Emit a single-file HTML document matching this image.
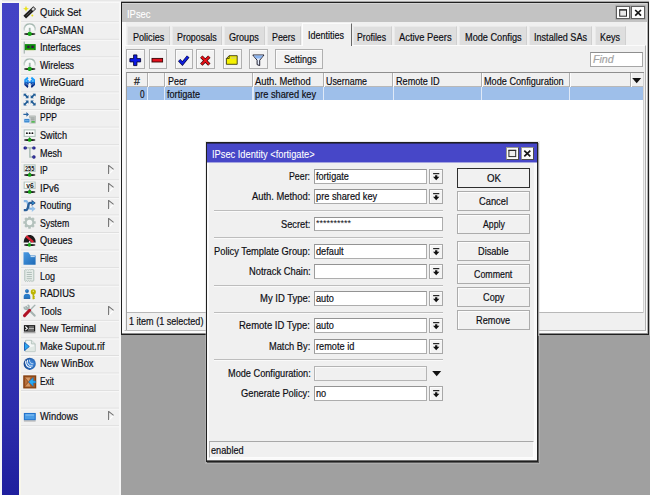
<!DOCTYPE html>
<html>
<head>
<meta charset="utf-8">
<title>WinBox - IPsec Identity</title>
<style>
*{box-sizing:border-box;margin:0;padding:0}
html,body{width:650px;height:495px;overflow:hidden}
body{background:#a0a0a0;font-family:"Liberation Sans",sans-serif;font-size:11px;color:#0e0e14;position:relative}
body>div,body>svg{position:absolute}
body>div>div{position:absolute}
.t{-webkit-text-stroke:0.2px currentColor;position:absolute;white-space:nowrap;transform-origin:0 0;line-height:1;display:block}
svg{overflow:visible}

</style>
</head>
<body>
<div style="left:0px;top:0px;width:650px;height:3px;background:linear-gradient(#e2e2e2,#f4f4f4 60%,#fcfcfc)"></div>
<div style="left:0px;top:0px;width:2px;height:495px;background:#f6f6f6"></div>
<div style="left:649px;top:0px;width:1px;height:336px;background:linear-gradient(#f4f4f4,#f0f0f0 40%,#c4c4c4 75%,#b0b0b0)"></div>
<div style="left:2px;top:3px;width:17px;height:492px;background:linear-gradient(#4343c5,#3c3cbe 55%,#2b2baa 85%,#1f1f9e)"></div>
<div style="left:19px;top:3px;width:100px;height:492px;background:#f0f0f0"></div>
<div style="left:119px;top:3px;width:2px;height:492px;background:#f7f7f7"></div>
<div style="left:19px;top:3px;width:1.5px;height:492px;background:#f8f6ea"></div>
<span class="t" style="left:40.00px;top:7.09px;transform:scaleX(0.8640);">Quick Set</span>
<svg style="left:23.3px;top:5.6px" width="13" height="13" viewBox="0 0 13 13"><path d="M1.7,11.2 L11.7,1.7" stroke="#1e1e1e" stroke-width="3.9" stroke-linecap="butt"/><path d="M9.2,4.1 L11.2,2.2" stroke="#dcdcdc" stroke-width="2.3"/><path d="M3.4,9.6 L8.4,4.9" stroke="#555" stroke-width="1"/><path d="M3,-0.2 L3.9,1.9 L6,2.7 L3.9,3.6 L3,5.7 L2.1,3.6 L0,2.7 L2.1,1.9 Z" fill="#e8e018"/><circle cx="9.3" cy="9.6" r="1" fill="#e8e018"/></svg>
<span class="t" style="left:40.00px;top:24.65px;transform:scaleX(0.8276);">CAPsMAN</span>
<svg style="left:23.3px;top:23.2px" width="13" height="13" viewBox="0 0 13 13"><defs><linearGradient id="cpg2" x1="0" y1="0" x2="0" y2="1"><stop offset="0" stop-color="#9fb3ab"/><stop offset="1" stop-color="#cfdad5"/></linearGradient></defs><path d="M1.35,7.6 A5.5,5.6 0 1 1 12.05,7.6" fill="#f8faf9" stroke="url(#cpg2)" stroke-width="1.5"/><rect x="5.8" y="4.8" width="1.8" height="4" fill="#9fb5ab"/><ellipse cx="6.7" cy="11" rx="5.7" ry="1" fill="#1a1a1a"/><circle cx="6.7" cy="10.9" r="2.15" fill="#14a814"/></svg>
<span class="t" style="left:40.00px;top:42.22px;transform:scaleX(0.8385);">Interfaces</span>
<svg style="left:23.3px;top:40.7px" width="13" height="13" viewBox="0 0 13 13"><rect x="0.7" y="0.6" width="1.1" height="12" fill="#9fb0aa"/><rect x="1.8" y="3.1" width="10.9" height="6" fill="#0c8c0c"/><rect x="4.3" y="4.7" width="2.2" height="2.3" fill="#3a1048"/><rect x="8.4" y="4.7" width="2.3" height="2.3" fill="#3a1048"/><path d="M3.5,8.8 h1 m1,0 h1 m1,0 h1 m1,0 h1" stroke="#d8d020" stroke-width="0.7"/></svg>
<span class="t" style="left:40.00px;top:59.78px;transform:scaleX(0.8063);">Wireless</span>
<svg style="left:23.3px;top:58.3px" width="13" height="13" viewBox="0 0 13 13"><defs><linearGradient id="cpg4" x1="0" y1="0" x2="0" y2="1"><stop offset="0" stop-color="#9fb3ab"/><stop offset="1" stop-color="#cfdad5"/></linearGradient></defs><path d="M1.35,7.6 A5.5,5.6 0 1 1 12.05,7.6" fill="#f8faf9" stroke="url(#cpg4)" stroke-width="1.5"/><rect x="5.8" y="4.8" width="1.8" height="4" fill="#9fb5ab"/><ellipse cx="6.7" cy="11" rx="5.7" ry="1" fill="#1a1a1a"/><circle cx="6.7" cy="10.9" r="2.15" fill="#14a814"/></svg>
<span class="t" style="left:40.00px;top:77.35px;transform:scaleX(0.8237);">WireGuard</span>
<svg style="left:23.3px;top:75.9px" width="13" height="13" viewBox="0 0 13 13"><defs><linearGradient id="wgg" x1="0" y1="0" x2="0" y2="1"><stop offset="0" stop-color="#1aa8ff"/><stop offset="0.42" stop-color="#1a90f4"/><stop offset="0.6" stop-color="#1048a8"/><stop offset="1" stop-color="#081c68"/></linearGradient></defs><path d="M4.4,0.7 L1.3,3.5 V9 L4.6,11.9 L5.5,10.1 L4.3,8.6 H5.7 V4 H4.3 L5.5,2.5 Z M8.9,0.7 L12,3.5 V9 L8.7,11.9 L7.8,10.1 L9,8.6 H7.6 V4 H9 L7.8,2.5 Z M5.5,5.6 H7.8 V6.9 H5.5 Z" fill="url(#wgg)"/><rect x="2.7" y="4.2" width="1.5" height="1.5" fill="#7fd0ff" opacity="0.8"/><rect x="9.1" y="4.2" width="1.5" height="1.5" fill="#7fd0ff" opacity="0.8"/><rect x="2.7" y="7" width="1.5" height="1.5" fill="#5a86c8" opacity="0.8"/><rect x="9.1" y="7" width="1.5" height="1.5" fill="#5a86c8" opacity="0.8"/></svg>
<span class="t" style="left:40.00px;top:94.91px;transform:scaleX(0.7863);">Bridge</span>
<svg style="left:23.3px;top:93.4px" width="13" height="13" viewBox="0 0 13 13"><path d="M1.6,1.3 L4.5,4.2" stroke="#1f5b95" stroke-width="1.7"/><path d="M0.6,0.3 L3.7,0.3 L0.6,3.4 Z" fill="#1f5b95"/><path d="M5.5,5.2 L2.4,5.2 L5.5,2.1 Z" fill="#1f5b95"/><path d="M11.6,1.3 L8.7,4.2" stroke="#1f5b95" stroke-width="1.7"/><path d="M12.6,0.3 L9.5,0.3 L12.6,3.4 Z" fill="#1f5b95"/><path d="M7.7,5.2 L10.8,5.2 L7.7,2.1 Z" fill="#1f5b95"/><path d="M1.6,11.5 L4.5,8.6" stroke="#1f5b95" stroke-width="1.7"/><path d="M0.6,12.5 L3.7,12.5 L0.6,9.4 Z" fill="#1f5b95"/><path d="M5.5,7.6 L2.4,7.6 L5.5,10.7 Z" fill="#1f5b95"/><path d="M11.6,11.5 L8.7,8.6" stroke="#1f5b95" stroke-width="1.7"/><path d="M12.6,12.5 L9.5,12.5 L12.6,9.4 Z" fill="#1f5b95"/><path d="M7.7,7.6 L10.8,7.6 L7.7,10.7 Z" fill="#1f5b95"/></svg>
<span class="t" style="left:40.00px;top:112.48px;transform:scaleX(0.7723);">PPP</span>
<svg style="left:23.3px;top:111.0px" width="13" height="13" viewBox="0 0 13 13"><path d="M0.4,2.7 H3.4 V1 L6,3.4 L3.4,5.8 V4.1 H0.4 Z" fill="#2a64a0"/><rect x="6.4" y="4.9" width="6.2" height="7.2" fill="#c4c8c6" stroke="#a9aeac" stroke-width="0.6"/><path d="M7.4,7 h4.2 M7.4,8.8 h4.2" stroke="#8c9290" stroke-width="0.8"/><rect x="8.4" y="10.3" width="3.4" height="1.2" fill="#28b428"/><rect x="0.9" y="7.7" width="6" height="4.2" fill="#2a7cc8" stroke="#eef4fa" stroke-width="0.8"/><rect x="2" y="9.2" width="3.8" height="1.1" fill="#7ab8ec"/></svg>
<span class="t" style="left:40.00px;top:130.04px;transform:scaleX(0.8334);">Switch</span>
<svg style="left:23.3px;top:128.6px" width="13" height="13" viewBox="0 0 13 13"><rect x="1.2" y="0.9" width="10.9" height="6.5" fill="#fbfdfc" stroke="#b2c3bc" stroke-width="1.1"/><circle cx="3.9" cy="4.15" r="0.95" fill="#111"/><circle cx="6.65" cy="4.15" r="0.95" fill="#111"/><circle cx="9.4" cy="4.15" r="0.95" fill="#111"/><path d="M5.5,10.3 L6.7,7.9 L7.9,10.3 Z" fill="#1a1a1a"/><ellipse cx="6.7" cy="11" rx="5.7" ry="1" fill="#1a1a1a"/><circle cx="6.7" cy="10.9" r="1.85" fill="#14a814"/></svg>
<span class="t" style="left:40.00px;top:147.61px;transform:scaleX(0.8179);">Mesh</span>
<svg style="left:23.3px;top:146.1px" width="13" height="13" viewBox="0 0 13 13"><path d="M2.2,1.9 H10.9 M6.9,1.9 V11 H10.9" fill="none" stroke="#a5b9b1" stroke-width="1.4"/><circle cx="2.2" cy="1.9" r="1.7" fill="#12127e"/><circle cx="2.2" cy="1.9" r="0.65" fill="#6a6ac8"/><circle cx="10.9" cy="1.9" r="1.7" fill="#12127e"/><circle cx="10.9" cy="1.9" r="0.65" fill="#6a6ac8"/><circle cx="10.9" cy="11" r="1.7" fill="#12127e"/><circle cx="10.9" cy="11" r="0.65" fill="#6a6ac8"/></svg>
<span class="t" style="left:40.00px;top:165.17px;transform:scaleX(0.7408);">IP</span>
<svg style="left:23.3px;top:163.7px" width="13" height="13" viewBox="0 0 13 13"><rect x="1.2" y="0.9" width="10.9" height="6.5" fill="#fbfdfc" stroke="#b2c3bc" stroke-width="1.1"/><text x="6.65" y="6.9" font-family="Liberation Sans" font-size="7.4" font-weight="bold" text-anchor="middle" fill="#111" textLength="9.2" lengthAdjust="spacingAndGlyphs">255</text><path d="M5.5,10.3 L6.7,7.9 L7.9,10.3 Z" fill="#1a1a1a"/><ellipse cx="6.7" cy="11" rx="5.7" ry="1" fill="#1a1a1a"/><circle cx="6.7" cy="10.9" r="1.85" fill="#14a814"/></svg>
<svg style="left:107.9px;top:165.09px" width="7" height="10" viewBox="0 0 7 10"><path d="M5.5,4.5 L0.8,9.2" fill="none" stroke="#fff" stroke-width="1.1"/><path d="M0.6,0 V9 M0.6,0.3 L5.6,4.4" fill="none" stroke="#707070" stroke-width="1.05"/></svg>
<span class="t" style="left:40.00px;top:182.74px;transform:scaleX(0.8632);">IPv6</span>
<svg style="left:23.3px;top:181.2px" width="13" height="13" viewBox="0 0 13 13"><rect x="1.2" y="0.9" width="10.9" height="6.5" fill="#fbfdfc" stroke="#b2c3bc" stroke-width="1.1"/><text x="7" y="6.8" font-family="Liberation Sans" font-size="7.6" font-weight="bold" text-anchor="middle" fill="#111" textLength="7.6" lengthAdjust="spacingAndGlyphs">v6</text><path d="M5.5,10.3 L6.7,7.9 L7.9,10.3 Z" fill="#1a1a1a"/><ellipse cx="6.7" cy="11" rx="5.7" ry="1" fill="#1a1a1a"/><circle cx="6.7" cy="10.9" r="1.85" fill="#14a814"/></svg>
<svg style="left:107.9px;top:182.65px" width="7" height="10" viewBox="0 0 7 10"><path d="M5.5,4.5 L0.8,9.2" fill="none" stroke="#fff" stroke-width="1.1"/><path d="M0.6,0 V9 M0.6,0.3 L5.6,4.4" fill="none" stroke="#707070" stroke-width="1.05"/></svg>
<span class="t" style="left:40.00px;top:200.30px;transform:scaleX(0.8229);">Routing</span>
<svg style="left:23.3px;top:198.8px" width="13" height="13" viewBox="0 0 13 13"><path d="M0.8,2.1 H3.2 C5.6,2.1 4.6,9.7 7,9.7 H9.4" fill="none" stroke="#86b6e4" stroke-width="2.1"/><path d="M8.8,6.7 L12.6,9.8 L8.8,12.9 Z" fill="#96c2ec"/><path d="M0.8,11.2 H3 C5.8,11.2 4.6,3.9 7,3.9 H9.4" fill="none" stroke="#2a5f98" stroke-width="2.3"/><path d="M8.6,0.7 L12.7,3.9 L8.6,7.1 Z" fill="#274c84"/><path d="M9.4,2.5 L11.4,3.9 L9.4,5.3 Z" fill="#2fa4e8"/></svg>
<svg style="left:107.9px;top:200.22px" width="7" height="10" viewBox="0 0 7 10"><path d="M5.5,4.5 L0.8,9.2" fill="none" stroke="#fff" stroke-width="1.1"/><path d="M0.6,0 V9 M0.6,0.3 L5.6,4.4" fill="none" stroke="#707070" stroke-width="1.05"/></svg>
<span class="t" style="left:40.00px;top:217.87px;transform:scaleX(0.7962);">System</span>
<svg style="left:23.3px;top:216.4px" width="13" height="13" viewBox="0 0 13 13"><path d="M11.22,5.19 L12.67,5.25 L12.67,7.75 L11.22,7.81 L10.76,8.92 L11.75,9.98 L9.98,11.75 L8.92,10.76 L7.81,11.22 L7.75,12.67 L5.25,12.67 L5.19,11.22 L4.08,10.76 L3.02,11.75 L1.25,9.98 L2.24,8.92 L1.78,7.81 L0.33,7.75 L0.33,5.25 L1.78,5.19 L2.24,4.08 L1.25,3.02 L3.02,1.25 L4.08,2.24 L5.19,1.78 L5.25,0.33 L7.75,0.33 L7.81,1.78 L8.92,2.24 L9.98,1.25 L11.75,3.02 L10.76,4.08 Z" fill="#b3c1bc"/><circle cx="6.5" cy="6.5" r="2.75" fill="#f4f6f5"/></svg>
<svg style="left:107.9px;top:217.78px" width="7" height="10" viewBox="0 0 7 10"><path d="M5.5,4.5 L0.8,9.2" fill="none" stroke="#fff" stroke-width="1.1"/><path d="M0.6,0 V9 M0.6,0.3 L5.6,4.4" fill="none" stroke="#707070" stroke-width="1.05"/></svg>
<span class="t" style="left:40.00px;top:235.43px;transform:scaleX(0.8384);">Queues</span>
<svg style="left:23.3px;top:233.9px" width="13" height="13" viewBox="0 0 13 13"><path d="M0.7,8.7 C0.7,-1.6 12.7,-1.6 12.7,8.7 Z" fill="#1c1c1c"/><path d="M3.2,2.2 L10.2,8.2" stroke="#dc2434" stroke-width="2.4"/><rect x="0.7" y="8.7" width="12" height="0.9" fill="#fafafa"/><rect x="6" y="7" width="1.3" height="3" fill="#ddd"/><ellipse cx="6.7" cy="11" rx="5.7" ry="0.95" fill="#1a1a1a"/><circle cx="6.4" cy="10.9" r="1.8" fill="#14a814"/></svg>
<span class="t" style="left:40.00px;top:253.00px;transform:scaleX(0.7492);">Files</span>
<svg style="left:23.3px;top:251.5px" width="13" height="13" viewBox="0 0 13 13"><defs><linearGradient id="flg" x1="0" y1="0" x2="1" y2="1"><stop offset="0" stop-color="#4a9ae2"/><stop offset="1" stop-color="#1e6ab6"/></linearGradient></defs><path d="M0.5,0.2 H5.4 L7.6,3.6 H12.6 V12.8 H0.5 Z" fill="url(#flg)"/><rect x="7.6" y="4.2" width="4.2" height="0.9" fill="#e8f2fc"/></svg>
<span class="t" style="left:40.00px;top:270.56px;transform:scaleX(0.8174);">Log</span>
<svg style="left:23.3px;top:269.1px" width="13" height="13" viewBox="0 0 13 13"><path d="M1.8,1 L2.7,0.2 L3.6,1 L4.5,0.2 L5.4,1 L6.3,0.2 L7.2,1 L8.1,0.2 L9,1 L9.9,0.2 L10.8,1 V11.6 L9.9,12.4 L9,11.6 L8.1,12.4 L7.2,11.6 L6.3,12.4 L5.4,11.6 L4.5,12.4 L3.6,11.6 L2.7,12.4 L1.8,11.6 Z" fill="#e6ece9" stroke="#b0c0b9" stroke-width="1"/><path d="M3.7,3.4 h5.2 M3.7,5.5 h5.2 M3.7,7.6 h5.2 M3.7,9.7 h5.2" stroke="#a9b9b2" stroke-width="0.9"/></svg>
<span class="t" style="left:40.00px;top:288.13px;transform:scaleX(0.8421);">RADIUS</span>
<svg style="left:23.3px;top:286.6px" width="13" height="13" viewBox="0 0 13 13"><circle cx="4" cy="4.1" r="1.9" fill="#1b68b2"/><circle cx="3.7" cy="3.7" r="0.9" fill="#3d8ad2"/><path d="M0.7,11.7 V9.8 A3.3,3 0 0 1 7.3,9.8 V11.7 Z" fill="#2a7cc8"/><path d="M0.9,11.7 V10.8 H7.1 V11.7 Z" fill="#175a9e"/><circle cx="10.3" cy="4.9" r="2.55" fill="#bcb400"/><circle cx="10.3" cy="4.2" r="0.75" fill="#ece890"/><path d="M10.3,7 V12.3 M10.3,9.4 H11.7 M10.3,11.2 H11.7" stroke="#bcb400" stroke-width="1.5" fill="none"/></svg>
<span class="t" style="left:40.00px;top:305.69px;transform:scaleX(0.8373);">Tools</span>
<svg style="left:23.3px;top:304.2px" width="13" height="13" viewBox="0 0 13 13"><path d="M3.2,3 L11.6,11.6" stroke="#a6b4b2" stroke-width="2.2" stroke-linecap="round"/><path d="M1.2,2.8 A2.4,2.4 0 1 0 4.6,0.8" fill="none" stroke="#a6b4b2" stroke-width="1.5"/><path d="M12.3,0.7 L7.4,5.8" stroke="#a6b4b2" stroke-width="1.3"/><path d="M6.6,6.3 L1.5,11.6" stroke="#b01224" stroke-width="3" stroke-linecap="round"/></svg>
<svg style="left:107.9px;top:305.61px" width="7" height="10" viewBox="0 0 7 10"><path d="M5.5,4.5 L0.8,9.2" fill="none" stroke="#fff" stroke-width="1.1"/><path d="M0.6,0 V9 M0.6,0.3 L5.6,4.4" fill="none" stroke="#707070" stroke-width="1.05"/></svg>
<span class="t" style="left:40.00px;top:323.26px;transform:scaleX(0.8430);">New Terminal</span>
<svg style="left:23.3px;top:321.8px" width="13" height="13" viewBox="0 0 13 13"><rect x="0.9" y="3.1" width="11.3" height="6.5" fill="#1c1c1c"/><path d="M2.3,4.5 L4.3,6.3 L2.3,8.1" fill="none" stroke="#fff" stroke-width="1.1"/><path d="M5.8,5 h5.2 M5.8,6.5 h5.2 M4.8,8 h6.2" stroke="#b4b4b4" stroke-width="1.1"/><rect x="0.6" y="10.3" width="11.9" height="0.9" fill="#8a8a8a"/></svg>
<span class="t" style="left:40.00px;top:340.82px;transform:scaleX(0.8386);">Make Supout.rif</span>
<svg style="left:23.3px;top:339.3px" width="13" height="13" viewBox="0 0 13 13"><path d="M2.6,1.2 H8.4 L12.1,4.9 V12.6 H2.6 Z" fill="#f4f7f6" stroke="#b3c2bc" stroke-width="1"/><path d="M8.4,1.2 V4.9 H12.1" fill="#dfe7e3" stroke="#b3c2bc" stroke-width="0.9"/><path d="M5,9 L12,7 L12,12.6 L3,12.6Z" fill="#dbe4e0" opacity="0.8"/><path d="M1.5,3.4 L6.3,7.5 L1.5,11.6 Z" fill="#2aa8f4" stroke="#2264b4" stroke-width="1"/></svg>
<span class="t" style="left:40.00px;top:358.39px;transform:scaleX(0.8498);">New WinBox</span>
<svg style="left:23.3px;top:356.9px" width="13" height="13" viewBox="0 0 13 13"><defs><radialGradient id="wbg" cx="0.6" cy="0.5" r="0.62"><stop offset="0" stop-color="#4f97e6"/><stop offset="0.65" stop-color="#2868b8"/><stop offset="1" stop-color="#153c7c"/></radialGradient></defs><circle cx="6.7" cy="6.8" r="6.1" fill="url(#wbg)"/><path d="M2.9,3.8 A5,5 0 0 0 8.2,10.4" fill="none" stroke="#fff" stroke-width="1.1"/><path d="M4.6,2.9 A4.6,4.6 0 0 0 9.8,9" fill="none" stroke="#eef4fc" stroke-width="1"/><path d="M6.6,2.7 A3.4,3.4 0 0 0 10.4,6.8" fill="none" stroke="#cfe0f4" stroke-width="0.9"/></svg>
<span class="t" style="left:40.00px;top:375.95px;transform:scaleX(0.7526);">Exit</span>
<svg style="left:23.3px;top:374.5px" width="13" height="13" viewBox="0 0 13 13"><rect x="0.9" y="1" width="11.7" height="11.8" fill="#a45a26" stroke="#84400f" stroke-width="1.3"/><path d="M2.2,2.4 H7.6 L5.6,6.4 Z M2.2,11.4 H7.6 L5.6,7.4 Z" fill="#d49a68"/><path d="M2.2,3.8 L4.6,6.9 L2.2,10 Z" fill="#b87440"/><path d="M5.6,6.9 L10.2,2.6 V5.9 H12.6 V7.9 H10.2 V11.2 Z" fill="#27aaf2" stroke="#1a78c8" stroke-width="0.6"/></svg>
<span class="t" style="left:40.00px;top:411.08px;transform:scaleX(0.8516);">Windows</span>
<svg style="left:23.3px;top:409.6px" width="13" height="13" viewBox="0 0 13 13"><rect x="1.4" y="3.5" width="10.8" height="6.2" fill="#4a9ce6" stroke="#2273cc" stroke-width="1.1"/><rect x="2.5" y="4.5" width="8.6" height="1" fill="#8cc4f4"/><rect x="0.9" y="10.5" width="11.7" height="0.9" fill="#9a9a9a"/></svg>
<svg style="left:107.9px;top:411.00px" width="7" height="10" viewBox="0 0 7 10"><path d="M5.5,4.5 L0.8,9.2" fill="none" stroke="#fff" stroke-width="1.1"/><path d="M0.6,0 V9 M0.6,0.3 L5.6,4.4" fill="none" stroke="#707070" stroke-width="1.05"/></svg>
<svg style="left:20.5px;top:0" width="99" height="495" viewBox="0 0 99 495"><rect x="0" y="21.27" width="98" height="1" fill="#dedede"/><rect x="0" y="22.27" width="98" height="1" fill="#f8f8f8"/><rect x="0" y="38.83" width="98" height="1" fill="#dedede"/><rect x="0" y="39.83" width="98" height="1" fill="#f8f8f8"/><rect x="0" y="56.40" width="98" height="1" fill="#dedede"/><rect x="0" y="57.40" width="98" height="1" fill="#f8f8f8"/><rect x="0" y="73.96" width="98" height="1" fill="#dedede"/><rect x="0" y="74.96" width="98" height="1" fill="#f8f8f8"/><rect x="0" y="91.53" width="98" height="1" fill="#dedede"/><rect x="0" y="92.53" width="98" height="1" fill="#f8f8f8"/><rect x="0" y="109.09" width="98" height="1" fill="#dedede"/><rect x="0" y="110.09" width="98" height="1" fill="#f8f8f8"/><rect x="0" y="126.66" width="98" height="1" fill="#dedede"/><rect x="0" y="127.66" width="98" height="1" fill="#f8f8f8"/><rect x="0" y="144.22" width="98" height="1" fill="#dedede"/><rect x="0" y="145.22" width="98" height="1" fill="#f8f8f8"/><rect x="0" y="161.78" width="98" height="1" fill="#dedede"/><rect x="0" y="162.78" width="98" height="1" fill="#f8f8f8"/><rect x="0" y="179.35" width="98" height="1" fill="#dedede"/><rect x="0" y="180.35" width="98" height="1" fill="#f8f8f8"/><rect x="0" y="196.91" width="98" height="1" fill="#dedede"/><rect x="0" y="197.91" width="98" height="1" fill="#f8f8f8"/><rect x="0" y="214.48" width="98" height="1" fill="#dedede"/><rect x="0" y="215.48" width="98" height="1" fill="#f8f8f8"/><rect x="0" y="232.05" width="98" height="1" fill="#dedede"/><rect x="0" y="233.05" width="98" height="1" fill="#f8f8f8"/><rect x="0" y="249.61" width="98" height="1" fill="#dedede"/><rect x="0" y="250.61" width="98" height="1" fill="#f8f8f8"/><rect x="0" y="267.18" width="98" height="1" fill="#dedede"/><rect x="0" y="268.18" width="98" height="1" fill="#f8f8f8"/><rect x="0" y="284.74" width="98" height="1" fill="#dedede"/><rect x="0" y="285.74" width="98" height="1" fill="#f8f8f8"/><rect x="0" y="302.31" width="98" height="1" fill="#dedede"/><rect x="0" y="303.31" width="98" height="1" fill="#f8f8f8"/><rect x="0" y="319.87" width="98" height="1" fill="#dedede"/><rect x="0" y="320.87" width="98" height="1" fill="#f8f8f8"/><rect x="0" y="337.44" width="98" height="1" fill="#dedede"/><rect x="0" y="338.44" width="98" height="1" fill="#f8f8f8"/><rect x="0" y="355.00" width="98" height="1" fill="#dedede"/><rect x="0" y="356.00" width="98" height="1" fill="#f8f8f8"/><rect x="0" y="372.56" width="98" height="1" fill="#dedede"/><rect x="0" y="373.56" width="98" height="1" fill="#f8f8f8"/><rect x="0" y="390.13" width="98" height="1" fill="#dedede"/><rect x="0" y="391.13" width="98" height="1" fill="#f8f8f8"/><rect x="0" y="407.69" width="98" height="1" fill="#dedede"/><rect x="0" y="408.69" width="98" height="1" fill="#f8f8f8"/><rect x="0" y="425.26" width="98" height="1" fill="#dedede"/><rect x="0" y="426.26" width="98" height="1" fill="#f8f8f8"/></svg>
<div style="left:121px;top:1px;width:528px;height:1px;background:#a6a6a6"></div>
<div style="left:121px;top:2px;width:528px;height:333px;background:#f0f0f0;border:1px solid #202020"></div>
<div style="left:647px;top:3px;width:1px;height:331px;background:#b4b4b4"></div>
<div style="left:122px;top:333px;width:526px;height:1px;background:#8c8c8c"></div>
<div style="left:122px;top:22px;width:4px;height:311px;background:#f9f9f9"></div>
<div style="left:646px;top:22px;width:1px;height:311px;background:#fbfbfb"></div>
<div style="left:122px;top:331px;width:525px;height:2px;background:#fbfbfb"></div>
<div style="left:122px;top:3px;width:525px;height:19px;background:#c3c3c3;border-top:1px solid #d4d4d4"></div>
<span class="t" style="left:126.50px;top:8.99px;transform:scaleX(0.8542);color:#fff;-webkit-text-stroke:0.12px #fff">IPsec</span>
<div style="left:616px;top:6px;width:14px;height:13px;background:#fdfdfd;border:1px solid #5e5e5e;box-shadow:0 0 0 0.6px rgba(90,90,90,0.35)"></div>
<svg style="left:616px;top:6px" width="14" height="13" viewBox="0 0 14 13"><rect x="3.7" y="3.9" width="6.8" height="6.3" fill="#e9e9e9" stroke="#2a2a2a" stroke-width="1"/><rect x="3.2" y="3.3" width="7.8" height="1.1" fill="#2a2a2a"/></svg>
<div style="left:631px;top:6px;width:14px;height:13px;background:#fdfdfd;border:1px solid #5e5e5e;box-shadow:0 0 0 0.6px rgba(90,90,90,0.35)"></div>
<svg style="left:631px;top:6px" width="14" height="13" viewBox="0 0 14 13"><path d="M4.2,4 L10,9.7 M10,4 L4.2,9.7" stroke="#161616" stroke-width="1.7" fill="none"/></svg>
<div style="left:127.3px;top:26px;width:42.500000000000014px;height:19px;background:#dedede;border:1px solid #e9e9e9;border-right-color:#d0d0d0;border-bottom:none"></div>
<span class="t" style="left:133.00px;top:32.19px;transform:scaleX(0.8232);">Policies</span>
<div style="left:172px;top:26px;width:50px;height:19px;background:#dedede;border:1px solid #e9e9e9;border-right-color:#d0d0d0;border-bottom:none"></div>
<span class="t" style="left:177.30px;top:32.19px;transform:scaleX(0.8096);">Proposals</span>
<div style="left:223.8px;top:26px;width:40.80000000000001px;height:19px;background:#dedede;border:1px solid #e9e9e9;border-right-color:#d0d0d0;border-bottom:none"></div>
<span class="t" style="left:228.80px;top:32.19px;transform:scaleX(0.8234);">Groups</span>
<div style="left:266.8px;top:26px;width:33.80000000000001px;height:19px;background:#dedede;border:1px solid #e9e9e9;border-right-color:#d0d0d0;border-bottom:none"></div>
<span class="t" style="left:271.80px;top:32.19px;transform:scaleX(0.8074);">Peers</span>
<div style="left:353px;top:26px;width:39px;height:19px;background:#dedede;border:1px solid #e9e9e9;border-right-color:#d0d0d0;border-bottom:none"></div>
<span class="t" style="left:357.30px;top:32.19px;transform:scaleX(0.7907);">Profiles</span>
<div style="left:393.8px;top:26px;width:63.19999999999999px;height:19px;background:#dedede;border:1px solid #e9e9e9;border-right-color:#d0d0d0;border-bottom:none"></div>
<span class="t" style="left:399.40px;top:32.19px;transform:scaleX(0.8519);">Active Peers</span>
<div style="left:459.2px;top:26px;width:67.80000000000001px;height:19px;background:#dedede;border:1px solid #e9e9e9;border-right-color:#d0d0d0;border-bottom:none"></div>
<span class="t" style="left:464.80px;top:32.19px;transform:scaleX(0.8340);">Mode Configs</span>
<div style="left:529.4px;top:26px;width:63.10000000000002px;height:19px;background:#dedede;border:1px solid #e9e9e9;border-right-color:#d0d0d0;border-bottom:none"></div>
<span class="t" style="left:534.00px;top:32.19px;transform:scaleX(0.8255);">Installed SAs</span>
<div style="left:594.6px;top:26px;width:31.399999999999977px;height:19px;background:#dedede;border:1px solid #e9e9e9;border-right-color:#d0d0d0;border-bottom:none"></div>
<span class="t" style="left:600.00px;top:32.19px;transform:scaleX(0.8178);">Keys</span>
<div style="left:124px;top:45px;width:522px;height:286px;background:#f0f0f0;border:1px solid #fbfbfb;border-right-color:#b2b2b2;border-bottom-color:#bcbcbc"></div>
<div style="left:126px;top:73px;width:1px;height:257px;background:#a4a4a4"></div>
<div style="left:301.7px;top:23.4px;width:50.2px;height:23px;background:#f0f0f0;border-left:1.4px solid #fdfdfd;border-top:1.4px solid #fbfbfb;border-right:1.2px solid #686868"></div>
<span class="t" style="left:308.20px;top:29.99px;transform:scaleX(0.8177);">Identities</span>
<div style="left:126px;top:49px;width:18.5px;height:20px;background:#f3f3f3;border:1px solid #b0b0b0;box-shadow:inset 1px 1px 0 #fcfcfc"></div>
<div style="left:148.5px;top:49px;width:18.5px;height:20px;background:#f3f3f3;border:1px solid #b0b0b0;box-shadow:inset 1px 1px 0 #fcfcfc"></div>
<div style="left:174.5px;top:49px;width:18.5px;height:20px;background:#f3f3f3;border:1px solid #b0b0b0;box-shadow:inset 1px 1px 0 #fcfcfc"></div>
<div style="left:196px;top:49px;width:18.599999999999994px;height:20px;background:#f3f3f3;border:1px solid #b0b0b0;box-shadow:inset 1px 1px 0 #fcfcfc"></div>
<div style="left:222.8px;top:49px;width:18.799999999999983px;height:20px;background:#f3f3f3;border:1px solid #b0b0b0;box-shadow:inset 1px 1px 0 #fcfcfc"></div>
<div style="left:249.3px;top:49px;width:18.30000000000001px;height:20px;background:#f3f3f3;border:1px solid #b0b0b0;box-shadow:inset 1px 1px 0 #fcfcfc"></div>
<div style="left:275.3px;top:49px;width:48.099999999999966px;height:20px;background:#f3f3f3;border:1px solid #b0b0b0;box-shadow:inset 1px 1px 0 #fcfcfc"></div>
<span class="t" style="left:283.70px;top:53.89px;transform:scaleX(0.8177);">Settings</span>
<svg style="left:126.4px;top:49.8px" width="120" height="20" viewBox="0 0 120 20"><path d="M7.6,4.9 h3.3 v3.7 h3.7 v3.3 h-3.7 v3.7 h-3.3 v-3.7 h-3.7 v-3.3 h3.7 z" fill="#0a18e8" stroke="#06063a" stroke-width="0.9"/><rect x="26" y="8.4" width="10.6" height="3.6" fill="#e4101c" stroke="#3a0606" stroke-width="0.9"/><path d="M53.2,10.2 L56.4,13.6 L62.2,6.4" fill="none" stroke="#06063a" stroke-width="3.2"/><path d="M53.4,10.3 L56.4,13.4 L62,6.6" fill="none" stroke="#1020e0" stroke-width="2"/><path d="M75.3,6.6 L83.3,14.6 M83.3,6.6 L75.3,14.6" fill="none" stroke="#3a0606" stroke-width="3.4"/><path d="M75.5,6.8 L83.1,14.4 M83.1,6.8 L75.5,14.4" fill="none" stroke="#e81018" stroke-width="2"/><path d="M103.2,5.7 H111.2 V14.3 H100.4 V8.5 Z" fill="#f4f000" stroke="#3a3a10" stroke-width="0.9"/><path d="M103.2,5.7 V8.5 H100.4" fill="none" stroke="#3a3a10" stroke-width="0.8"/><path d="M105,8 h5" stroke="#c8c49a" stroke-width="1"/></svg>
<svg style="left:249.2px;top:50.1px" width="19" height="20" viewBox="0 0 19 20"><path d="M3.8,5 H15 L10.7,10.2 V15.6 L8.1,14.6 V10.2 Z" fill="#e8f0ff" stroke="#202030" stroke-width="1"/><path d="M4.6,5.4 H14.2 L11.4,8.4 H7.4 Z" fill="#8ab4f0"/></svg>
<div style="left:590.4px;top:52.2px;width:52.3px;height:14.5px;background:#fff;border:1px solid #a6a6a6;border-top-color:#8e8e8e"></div>
<span class="t" style="left:593.30px;top:54.07px;transform:scaleX(0.9254);font-size:11.5px;color:#a4a4a4;font-style:italic;">Find</span>
<div style="left:126px;top:72px;width:517.5px;height:240.5px;background:#fff;border-top:1px solid #8e8e8e;border-left:1px solid #a0a0a0"></div>
<div style="left:127px;top:73px;width:516.5px;height:14.2px;background:#f0f0f0;border-bottom:1px solid #b8b8b8"></div>
<div style="left:127px;top:87.2px;width:516.5px;height:12.6px;background:#9ebfea"></div>
<div style="left:146.9px;top:73px;width:1px;height:14px;background:#b0b0b0"></div>
<div style="left:147.9px;top:73px;width:1px;height:14px;background:#fdfdfd"></div>
<div style="left:147.1px;top:87.2px;width:1.2px;height:12.6px;background:#dfe9f7"></div>
<div style="left:163.9px;top:73px;width:1px;height:14px;background:#b0b0b0"></div>
<div style="left:164.9px;top:73px;width:1px;height:14px;background:#fdfdfd"></div>
<div style="left:164.1px;top:87.2px;width:1.2px;height:12.6px;background:#dfe9f7"></div>
<div style="left:252.2px;top:73px;width:1px;height:14px;background:#b0b0b0"></div>
<div style="left:253.2px;top:73px;width:1px;height:14px;background:#fdfdfd"></div>
<div style="left:252.39999999999998px;top:87.2px;width:1.2px;height:12.6px;background:#dfe9f7"></div>
<div style="left:323.1px;top:73px;width:1px;height:14px;background:#b0b0b0"></div>
<div style="left:324.1px;top:73px;width:1px;height:14px;background:#fdfdfd"></div>
<div style="left:323.3px;top:87.2px;width:1.2px;height:12.6px;background:#dfe9f7"></div>
<div style="left:392.3px;top:73px;width:1px;height:14px;background:#b0b0b0"></div>
<div style="left:393.3px;top:73px;width:1px;height:14px;background:#fdfdfd"></div>
<div style="left:392.5px;top:87.2px;width:1.2px;height:12.6px;background:#dfe9f7"></div>
<div style="left:480.7px;top:73px;width:1px;height:14px;background:#b0b0b0"></div>
<div style="left:481.7px;top:73px;width:1px;height:14px;background:#fdfdfd"></div>
<div style="left:480.9px;top:87.2px;width:1.2px;height:12.6px;background:#dfe9f7"></div>
<div style="left:568.8px;top:73px;width:1px;height:14px;background:#b0b0b0"></div>
<div style="left:569.8px;top:73px;width:1px;height:14px;background:#fdfdfd"></div>
<div style="left:569.0px;top:87.2px;width:1.2px;height:12.6px;background:#dfe9f7"></div>
<div style="left:629.6px;top:73px;width:1px;height:14px;background:#b0b0b0"></div>
<div style="left:630.6px;top:73px;width:1px;height:14px;background:#fdfdfd"></div>
<svg style="left:632.4px;top:78px" width="10" height="6" viewBox="0 0 10 6"><path d="M0.2,0 H9.2 L4.7,5.2 Z" fill="#111"/></svg>
<span class="t" style="left:133.80px;top:75.59px;transform:scaleX(0.9645);">#</span>
<span class="t" style="left:167.70px;top:75.59px;transform:scaleX(0.8091);">Peer</span>
<span class="t" style="left:255.30px;top:75.59px;transform:scaleX(0.8513);">Auth. Method</span>
<span class="t" style="left:325.70px;top:75.59px;transform:scaleX(0.8081);">Username</span>
<span class="t" style="left:395.80px;top:75.59px;transform:scaleX(0.8294);">Remote ID</span>
<span class="t" style="left:483.90px;top:75.59px;transform:scaleX(0.8302);">Mode Configuration</span>
<span class="t" style="left:140.20px;top:88.59px;transform:scaleX(0.7520);">0</span>
<span class="t" style="left:166.60px;top:88.59px;transform:scaleX(0.8303);">fortigate</span>
<span class="t" style="left:254.80px;top:88.59px;transform:scaleX(0.8384);">pre shared key</span>
<div style="left:127px;top:312.2px;width:516.5px;height:1px;background:#b8b8b8"></div>
<div style="left:643px;top:73px;width:1px;height:240px;background:#d2d2d2"></div>
<span class="t" style="left:129.40px;top:316.29px;transform:scaleX(0.8223);">1 item (1 selected)</span>
<div style="left:205px;top:141px;width:335px;height:323px;background:rgba(200,200,200,0.35)"></div>
<div style="left:538px;top:143px;width:1px;height:193px;background:#a2a2a2"></div>
<div style="left:538px;top:336px;width:1px;height:127px;background:#5c5c5c"></div>
<div style="left:207px;top:462px;width:332px;height:1px;background:#5c5c5c"></div>
<div style="left:206px;top:142px;width:332px;height:320px;background:#f0f0f0;border:1px solid #202020"></div>
<div style="left:207px;top:460px;width:330px;height:1px;background:#6c6c6c"></div>
<div style="left:207px;top:458px;width:330px;height:2px;background:#fafafa"></div>
<div style="left:534px;top:162px;width:3px;height:298px;background:#fafafa"></div>
<div style="left:207px;top:162px;width:2px;height:298px;background:#fafafa"></div>
<div style="left:207px;top:143px;width:330px;height:19px;background:#4747c8;border-top:1px solid #2c2c70"></div>
<div style="left:207px;top:162px;width:330px;height:1px;background:#a4a4e0"></div>
<span class="t" style="left:211.70px;top:149.49px;transform:scaleX(0.8432);color:#fff;-webkit-text-stroke:0.08px #fff">IPsec Identity &lt;fortigate&gt;</span>
<div style="left:506px;top:147px;width:13px;height:12.5px;background:#fbfbfb;border:1px solid #4a4a4a;border-top-color:#9a9a90;border-left-color:#9a9a90"></div>
<svg style="left:506px;top:147px" width="13" height="13" viewBox="0 0 13 13"><rect x="2.9" y="3.4" width="6.8" height="6.2" fill="#ececec" stroke="#2a2a2a" stroke-width="1"/><rect x="2.4" y="2.8" width="7.8" height="1.1" fill="#2a2a2a"/></svg>
<div style="left:521px;top:147px;width:13px;height:12.5px;background:#fbfbfb;border:1px solid #4a4a4a;border-top-color:#9a9a90;border-left-color:#9a9a90"></div>
<svg style="left:521px;top:147px" width="13" height="13" viewBox="0 0 13 13"><path d="M3.3,3.6 L9.3,9.4 M9.3,3.6 L3.3,9.4" stroke="#161616" stroke-width="1.7" fill="none"/></svg>
<span class="t" style="left:289.20px;top:170.99px;transform:scaleX(0.7988);">Peer:</span>
<div style="left:313.8px;top:169px;width:113px;height:14.5px;background:#fff;border:1px solid #adadad;border-top-color:#939393;border-left-color:#9c9c9c"></div>
<span class="t" style="left:316.40px;top:170.99px;transform:scaleX(0.8253);">fortigate</span>
<div style="left:428.7px;top:169px;width:14.4px;height:14.5px;background:#f4f4f4;border:1px solid #a8a8a8;box-shadow:inset 1px 1px 0 #fdfdfd"></div>
<svg style="left:428.7px;top:169px" width="15" height="15" viewBox="0 0 15 15"><rect x="4.1" y="4.1" width="6.2" height="1.1" fill="#111"/><path d="M6.1,6.2 H8.3 V7.8 H10.4 L7.2,11.3 L4,7.8 H6.1 Z" fill="#111"/></svg>
<span class="t" style="left:251.90px;top:191.19px;transform:scaleX(0.8513);">Auth. Method:</span>
<div style="left:313.8px;top:189.2px;width:113px;height:14.5px;background:#fff;border:1px solid #adadad;border-top-color:#939393;border-left-color:#9c9c9c"></div>
<span class="t" style="left:316.40px;top:191.19px;transform:scaleX(0.8411);">pre shared key</span>
<div style="left:428.7px;top:189.2px;width:14.4px;height:14.5px;background:#f4f4f4;border:1px solid #a8a8a8;box-shadow:inset 1px 1px 0 #fdfdfd"></div>
<svg style="left:428.7px;top:189.2px" width="15" height="15" viewBox="0 0 15 15"><rect x="4.1" y="4.1" width="6.2" height="1.1" fill="#111"/><path d="M6.1,6.2 H8.3 V7.8 H10.4 L7.2,11.3 L4,7.8 H6.1 Z" fill="#111"/></svg>
<div style="left:214px;top:209.8px;width:229.3px;height:1px;background:#bdbdbd"></div>
<div style="left:214px;top:210.8px;width:229.3px;height:1px;background:#fafafa"></div>
<span class="t" style="left:280.80px;top:218.99px;transform:scaleX(0.8437);">Secret:</span>
<div style="left:313.8px;top:217px;width:129.5px;height:14px;background:#fff;border:1px solid #adadad;border-top-color:#939393;border-left-color:#9c9c9c"></div>
<span class="t" style="left:316.40px;top:219.18px;transform:scaleX(0.9992);font-size:9px;-webkit-text-stroke:0">**********</span>
<div style="left:214px;top:237.2px;width:229.3px;height:1px;background:#bdbdbd"></div>
<div style="left:214px;top:238.2px;width:229.3px;height:1px;background:#fafafa"></div>
<span class="t" style="left:214.20px;top:245.99px;transform:scaleX(0.8457);">Policy Template Group:</span>
<div style="left:313.8px;top:244px;width:113px;height:14.5px;background:#fff;border:1px solid #adadad;border-top-color:#939393;border-left-color:#9c9c9c"></div>
<span class="t" style="left:316.40px;top:245.99px;transform:scaleX(0.8357);">default</span>
<div style="left:428.7px;top:244px;width:14.4px;height:14.5px;background:#f4f4f4;border:1px solid #a8a8a8;box-shadow:inset 1px 1px 0 #fdfdfd"></div>
<svg style="left:428.7px;top:244px" width="15" height="15" viewBox="0 0 15 15"><rect x="4.1" y="4.1" width="6.2" height="1.1" fill="#111"/><path d="M6.1,6.2 H8.3 V7.8 H10.4 L7.2,11.3 L4,7.8 H6.1 Z" fill="#111"/></svg>
<span class="t" style="left:248.50px;top:266.39px;transform:scaleX(0.8481);">Notrack Chain:</span>
<div style="left:313.8px;top:264.4px;width:113px;height:14.5px;background:#fff;border:1px solid #adadad;border-top-color:#939393;border-left-color:#9c9c9c"></div>
<div style="left:428.7px;top:264.4px;width:14.4px;height:14.5px;background:#f4f4f4;border:1px solid #a8a8a8;box-shadow:inset 1px 1px 0 #fdfdfd"></div>
<svg style="left:428.7px;top:264.4px" width="15" height="15" viewBox="0 0 15 15"><rect x="4.1" y="4.1" width="6.2" height="1.1" fill="#111"/><path d="M6.1,6.2 H8.3 V7.8 H10.4 L7.2,11.3 L4,7.8 H6.1 Z" fill="#111"/></svg>
<div style="left:214px;top:284.5px;width:229.3px;height:1px;background:#bdbdbd"></div>
<div style="left:214px;top:285.5px;width:229.3px;height:1px;background:#fafafa"></div>
<span class="t" style="left:259.80px;top:292.99px;transform:scaleX(0.8618);">My ID Type:</span>
<div style="left:313.8px;top:291px;width:113px;height:14.5px;background:#fff;border:1px solid #adadad;border-top-color:#939393;border-left-color:#9c9c9c"></div>
<span class="t" style="left:316.40px;top:292.99px;transform:scaleX(0.8350);">auto</span>
<div style="left:428.7px;top:291px;width:14.4px;height:14.5px;background:#f4f4f4;border:1px solid #a8a8a8;box-shadow:inset 1px 1px 0 #fdfdfd"></div>
<svg style="left:428.7px;top:291px" width="15" height="15" viewBox="0 0 15 15"><rect x="4.1" y="4.1" width="6.2" height="1.1" fill="#111"/><path d="M6.1,6.2 H8.3 V7.8 H10.4 L7.2,11.3 L4,7.8 H6.1 Z" fill="#111"/></svg>
<div style="left:214px;top:311.8px;width:229.3px;height:1px;background:#bdbdbd"></div>
<div style="left:214px;top:312.8px;width:229.3px;height:1px;background:#fafafa"></div>
<span class="t" style="left:239.20px;top:320.39px;transform:scaleX(0.8624);">Remote ID Type:</span>
<div style="left:313.8px;top:318.4px;width:113px;height:14.5px;background:#fff;border:1px solid #adadad;border-top-color:#939393;border-left-color:#9c9c9c"></div>
<span class="t" style="left:316.40px;top:320.39px;transform:scaleX(0.8350);">auto</span>
<div style="left:428.7px;top:318.4px;width:14.4px;height:14.5px;background:#f4f4f4;border:1px solid #a8a8a8;box-shadow:inset 1px 1px 0 #fdfdfd"></div>
<svg style="left:428.7px;top:318.4px" width="15" height="15" viewBox="0 0 15 15"><rect x="4.1" y="4.1" width="6.2" height="1.1" fill="#111"/><path d="M6.1,6.2 H8.3 V7.8 H10.4 L7.2,11.3 L4,7.8 H6.1 Z" fill="#111"/></svg>
<span class="t" style="left:269.00px;top:340.99px;transform:scaleX(0.8425);">Match By:</span>
<div style="left:313.8px;top:339px;width:113px;height:14.5px;background:#fff;border:1px solid #adadad;border-top-color:#939393;border-left-color:#9c9c9c"></div>
<span class="t" style="left:316.40px;top:340.99px;transform:scaleX(0.8350);">remote id</span>
<div style="left:428.7px;top:339px;width:14.4px;height:14.5px;background:#f4f4f4;border:1px solid #a8a8a8;box-shadow:inset 1px 1px 0 #fdfdfd"></div>
<svg style="left:428.7px;top:339px" width="15" height="15" viewBox="0 0 15 15"><rect x="4.1" y="4.1" width="6.2" height="1.1" fill="#111"/><path d="M6.1,6.2 H8.3 V7.8 H10.4 L7.2,11.3 L4,7.8 H6.1 Z" fill="#111"/></svg>
<div style="left:214px;top:359.2px;width:229.3px;height:1px;background:#bdbdbd"></div>
<div style="left:214px;top:360.2px;width:229.3px;height:1px;background:#fafafa"></div>
<span class="t" style="left:227.50px;top:367.99px;transform:scaleX(0.8349);">Mode Configuration:</span>
<div style="left:313.8px;top:366px;width:113px;height:14.5px;background:#f0f0f0;border:1px solid #b4b4b4;box-shadow:inset 1px 1px 0 #fafafa"></div>
<svg style="left:431.9px;top:371px" width="10" height="6" viewBox="0 0 10 6"><path d="M0.2,0 H9.2 L4.7,5.2 Z" fill="#111"/></svg>
<span class="t" style="left:241.40px;top:387.99px;transform:scaleX(0.8461);">Generate Policy:</span>
<div style="left:313.8px;top:386px;width:113px;height:14.5px;background:#fff;border:1px solid #adadad;border-top-color:#939393;border-left-color:#9c9c9c"></div>
<span class="t" style="left:316.40px;top:387.99px;transform:scaleX(0.8350);">no</span>
<div style="left:428.7px;top:386px;width:14.4px;height:14.5px;background:#f4f4f4;border:1px solid #a8a8a8;box-shadow:inset 1px 1px 0 #fdfdfd"></div>
<svg style="left:428.7px;top:386px" width="15" height="15" viewBox="0 0 15 15"><rect x="4.1" y="4.1" width="6.2" height="1.1" fill="#111"/><path d="M6.1,6.2 H8.3 V7.8 H10.4 L7.2,11.3 L4,7.8 H6.1 Z" fill="#111"/></svg>
<div style="left:457px;top:167.8px;width:72.6px;height:20px;background:#f1f1f1;border:1.4px solid #2e2e2e"></div>
<span class="t" style="left:487.10px;top:172.79px;transform:scaleX(0.8808);">OK</span>
<div style="left:457px;top:191px;width:72.6px;height:19.8px;background:#f1f1f1;border:1px solid #acacac;box-shadow:inset 1px 1px 0 #fcfcfc"></div>
<span class="t" style="left:478.90px;top:195.99px;transform:scaleX(0.8470);">Cancel</span>
<div style="left:457px;top:214px;width:72.6px;height:19.8px;background:#f1f1f1;border:1px solid #acacac;box-shadow:inset 1px 1px 0 #fcfcfc"></div>
<span class="t" style="left:482.50px;top:218.99px;transform:scaleX(0.7923);">Apply</span>
<div style="left:457px;top:241px;width:72.6px;height:19.8px;background:#f1f1f1;border:1px solid #acacac;box-shadow:inset 1px 1px 0 #fcfcfc"></div>
<span class="t" style="left:478.08px;top:245.99px;transform:scaleX(0.8350);">Disable</span>
<div style="left:457px;top:264.3px;width:72.6px;height:19.8px;background:#f1f1f1;border:1px solid #acacac;box-shadow:inset 1px 1px 0 #fcfcfc"></div>
<span class="t" style="left:474.25px;top:269.29px;transform:scaleX(0.8033);">Comment</span>
<div style="left:457px;top:287.2px;width:72.6px;height:19.8px;background:#f1f1f1;border:1px solid #acacac;box-shadow:inset 1px 1px 0 #fcfcfc"></div>
<span class="t" style="left:482.68px;top:292.19px;transform:scaleX(0.8350);">Copy</span>
<div style="left:457px;top:310.2px;width:72.6px;height:19.8px;background:#f1f1f1;border:1px solid #acacac;box-shadow:inset 1px 1px 0 #fcfcfc"></div>
<span class="t" style="left:476.30px;top:315.19px;transform:scaleX(0.8350);">Remove</span>
<div style="left:209px;top:441px;width:324.5px;height:16.5px;background:#f0f0f0;border-top:1px solid #a8a8a8;border-left:1px solid #b8b8b8;border-bottom:1px solid #fcfcfc;border-right:1px solid #fcfcfc"></div>
<span class="t" style="left:210.60px;top:445.19px;transform:scaleX(0.8350);">enabled</span>
</body>
</html>
